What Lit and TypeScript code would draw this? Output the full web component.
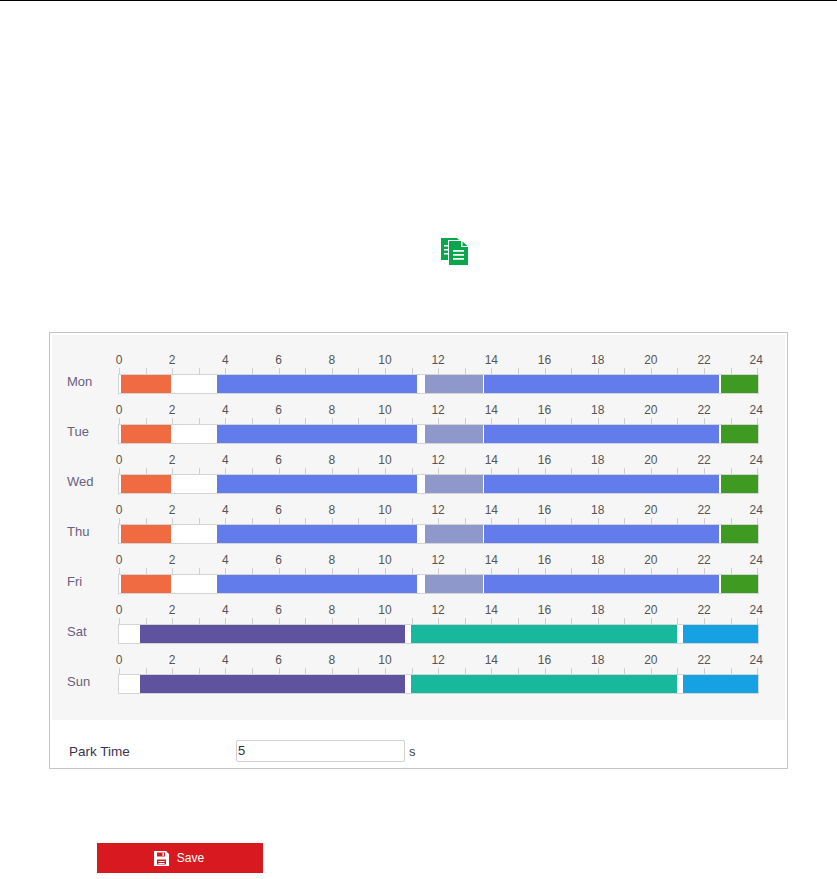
import { LitElement, html, css } from "lit";
import { customElement } from "lit/decorators.js";

type Seg = [number, string];
const weekday: Seg[] = [
  [2, ""], [50, "orange"], [46, "gap"], [200, "blue"], [8, "gap"], [58, "slate"], [1, "gap"], [235, "blue"], [2, "gap"], [37, "green"],
];
const weekend: Seg[] = [
  [21, ""], [265, "purple"], [6, "gap"], [266, "teal"], [6, "gap"], [75, "sky"],
];
const days: [string, Seg[]][] = [
  ["Mon", weekday], ["Tue", weekday], ["Wed", weekday], ["Thu", weekday], ["Fri", weekday], ["Sat", weekend], ["Sun", weekend],
];
const hours = Array.from({ length: 24 }, (_, i) => i);

@customElement("app-root")
export class AppRoot extends LitElement {
  static styles = css`
    :host { display: block; width: 837px; height: 879px; background: #fff; font-family: "Liberation Sans", Arial, sans-serif; font-size: 12px; overflow: hidden; }
    .topline { height: 1px; background: #000; }
    .copy { display: flex; padding: 237px 0 0 441px; height: 331px; box-sizing: border-box; }
    .copy svg { display: block; }
    .panel { margin-left: 49px; width: 739px; height: 437px; box-sizing: border-box; border: 1px solid #c4c4c4; padding: 2px; }
    .sched { background: #f6f6f6; padding: 19px 0 26px 15px; display: flex; flex-direction: column; gap: 10px; height: 385px; box-sizing: border-box; }
    .row { display: grid; grid-template-columns: 51px 641px; grid-template-rows: 20px 20px; }
    .day { grid-row: 1 / 3; align-self: end; height: 24px; line-height: 24px; color: #6b5f80; font-size: 13px; }
    .ruler { display: flex; padding-left: 1px; align-items: flex-end; height: 20px; }
    .cell { width: 26.6px; height: 6px; flex: none; border-left: 1px solid #cfcfcf; box-sizing: border-box; position: relative; }
    .cell.end { width: 1px; }
    .num { position: absolute; bottom: 8px; left: -1px; transform: translateX(-50%); line-height: 12px; color: #555; font-size: 12px; white-space: nowrap; }
    .end .num { left: -2px; }
    .track { display: flex; height: 20px; box-sizing: border-box; border: 1px solid #d4d4d4; background: #fff; }
    .seg { height: 100%; flex: none; }
    .orange { background: #f06a42; }
    .blue { background: #627deb; }
    .slate { background: #8f98cb; }
    .green { background: #3f9a22; }
    .purple { background: #5f53a0; }
    .teal { background: #17b89c; }
    .sky { background: #16a2e2; }
    .park { display: flex; align-items: center; height: 22px; margin-top: 20px; padding-left: 17px; color: #3a3350; }
    .park-label { width: 167px; font-size: 13.5px; }
    .box { width: 169px; height: 22px; box-sizing: border-box; border: 1px solid #cfd0d8; border-radius: 2px; background: #fff; padding: 0 0 0 1px; font: 13px/20px "Liberation Sans", Arial, sans-serif; color: #333; }
    .unit { margin-left: 4px; color: #444; font-size: 13px; }
    .save { margin: 74px 0 0 97px; width: 166px; height: 30px; background: #d81a20; color: #fff; display: flex; align-items: center; justify-content: center; gap: 8px; font-size: 12px; padding-right: 2px; box-sizing: border-box; }
    .save svg { display: block; }
  `;

  render() {
    return html`
      <div class="topline"></div>
      <div class="copy">
        <svg width="28" height="27" viewBox="0 0 28 27">
          <path fill="#0aa64c" d="M0 0H16L19 3V22H0Z" />
          <path fill="#fff" d="M3 7h5v1.5H3zM3 11h5v1.5H3zM3 15h5v1.5H3z" />
          <path fill="#fff" d="M7 2H21L27 8V27H7Z" />
          <path fill="#0aa64c" d="M8 3H20V9H27V27H8Z" />
          <path fill="#0aa64c" d="M21.5 3.5L26.5 8H21.5Z" />
          <path fill="#fff" d="M12 12h11v1.7H12zM12 16h11v1.7H12zM12 20h11v1.7H12z" />
        </svg>
      </div>
      <div class="panel">
        <div class="sched">
          ${days.map(([name, segs]) => html`
            <div class="row">
              <div class="day">${name}</div>
              <div class="ruler">
                ${hours.map((h) => html`<div class="cell">${h % 2 === 0 ? html`<span class="num">${h}</span>` : ""}</div>`)}
                <div class="cell end"><span class="num">24</span></div>
              </div>
              <div class="track" style="grid-column: 2">
                ${segs.map(([w, c]) => html`<div class="seg ${c}" style="width:${w}px"></div>`)}
              </div>
            </div>`)}
        </div>
        <div class="park">
          <div class="park-label">Park Time</div>
          <div class="box">5</div>
          <div class="unit">s</div>
        </div>
      </div>
      <div class="save">
        <svg width="15" height="15" viewBox="0 0 15 15">
          <path fill="#fff" fill-rule="evenodd" d="M0 0H12L15 3V15H0ZM3 1.5V5.5H11V1.5ZM8.5 2H10V5H8.5ZM3 8.5V13.5H12V8.5Z" />
          <path fill="#fff" d="M4.5 10h6v1h-6zM4.5 12h6v1h-6z" />
        </svg>
        <span>Save</span>
      </div>
    `;
  }
}
